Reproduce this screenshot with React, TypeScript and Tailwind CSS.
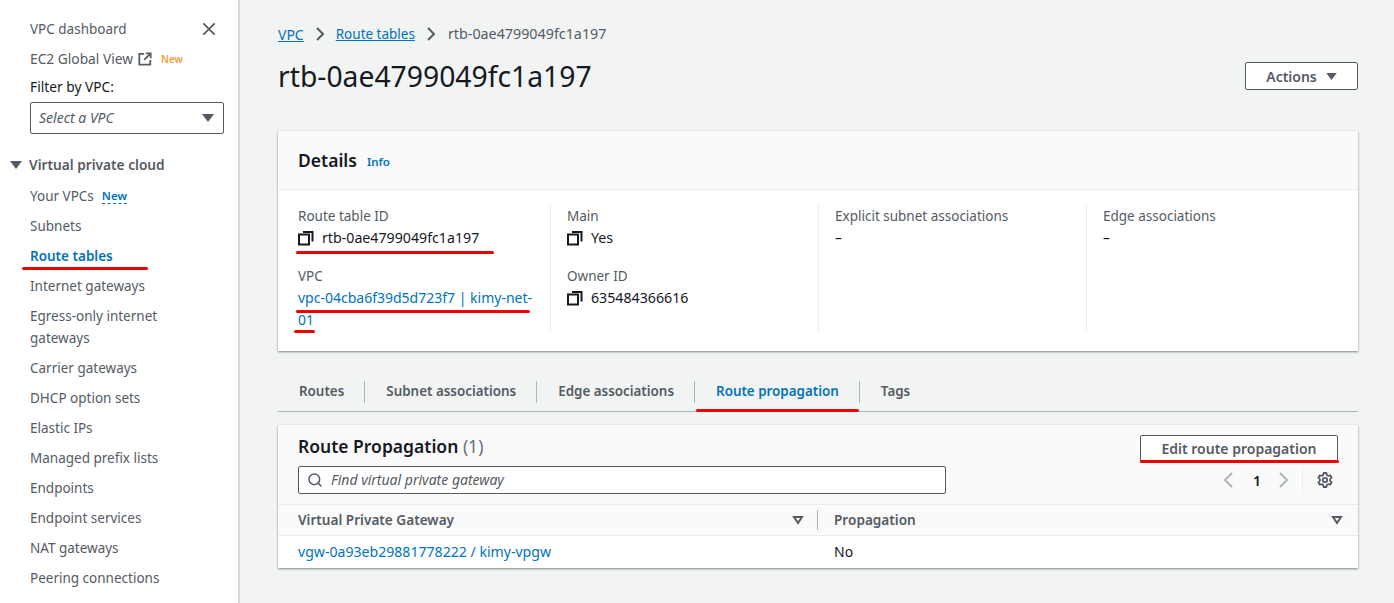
import { Search } from "lucide-react";
import type { ReactNode } from "react";

const font = { fontFamily: '"Noto Sans", sans-serif' };

const navItems = [
  "Subnets",
  "Route tables",
  "Internet gateways",
  "Egress-only internet gateways",
  "Carrier gateways",
  "DHCP option sets",
  "Elastic IPs",
  "Managed prefix lists",
  "Endpoints",
  "Endpoint services",
  "NAT gateways",
  "Peering connections",
];

// hand-drawn red marker strokes from the original screenshot
function Marker({ className }: { className: string }) {
  return <span className={`absolute h-[3px] rounded-full bg-[#f00000] ${className}`} />;
}

function Caret({ className = "" }: { className?: string }) {
  return (
    <svg viewBox="0 0 12 8" className={`h-2 w-3 ${className}`} fill="currentColor">
      <path d="M0 0h12L6 8z" />
    </svg>
  );
}

function SortCaret() {
  return (
    <svg viewBox="0 0 12 10" className="h-2.5 w-3 text-[#545b64]" fill="none" stroke="currentColor" strokeWidth="2">
      <path d="M2 2h8L6 8z" />
    </svg>
  );
}

function CopyIcon() {
  return (
    <svg viewBox="0 0 16 16" className="h-4 w-4 shrink-0 text-[#16191f]" fill="none" stroke="currentColor" strokeWidth="2">
      <rect x="1" y="4.5" width="10" height="10" />
      <path d="M5 2h9.5v9.5" />
    </svg>
  );
}

function ExternalIcon() {
  return (
    <svg viewBox="0 0 16 16" className="h-[14px] w-[14px] text-[#545b64]" fill="none" stroke="currentColor" strokeWidth="2">
      <path d="M7 2H1.5v12.5H14V9" />
      <path d="M9 1.5h5.5V7M14.5 1.5 7 9" />
    </svg>
  );
}

function GearIcon() {
  return (
    <svg viewBox="0 0 16 16" className="h-4 w-4 text-[#545b64]" fill="none" stroke="currentColor" strokeWidth="1.8" strokeLinejoin="round">
      <path d="M6.6 1h2.8l.4 2 1.5.9 2-.6 1.3 2.4-1.5 1.4v1.8l1.5 1.4-1.3 2.4-2-.6-1.5.9-.4 2H6.6l-.4-2-1.5-.9-2 .6-1.3-2.4 1.5-1.4V7.1L1.4 5.7l1.3-2.4 2 .6 1.5-.9z" />
      <circle cx="8" cy="8" r="2.2" />
    </svg>
  );
}

function Chevron({ dir }: { dir: "left" | "right" }) {
  return (
    <svg viewBox="0 0 12 16" className="h-4 w-3 text-[#aab7b8]" fill="none" stroke="currentColor" strokeWidth="2">
      <path d={dir === "left" ? "M10 1 3 8l7 7" : "M2 1l7 7-7 7"} />
    </svg>
  );
}

function Sidebar() {
  return (
    <aside className="relative h-[603px] w-[240px] shrink-0 overflow-hidden border-r-2 border-[#d5dbdb] bg-white pl-[30px] text-[13.5px] text-[#545b64]">
      <div className="mt-[14px] flex h-[30px] items-center justify-between pr-[22px]">
        <span>VPC dashboard</span>
        <svg viewBox="0 0 16 16" className="mt-[-1px] h-[14px] w-[14px] text-[#545b64]" fill="none" stroke="currentColor" strokeWidth="2">
          <path d="M1.5 1.5l13 13M14.5 1.5l-13 13" />
        </svg>
      </div>
      <div className="flex h-[30px] items-center">
        <span className="text-[13.75px]">EC2 Global View</span>
        <span className="ml-[5px]"><ExternalIcon /></span>
        <span className="ml-[9px] mt-[1px] text-[10px] font-semibold text-[#f89c3a]">New</span>
      </div>
      <div className="flex h-[27px] items-center text-[13.75px] text-[#16191f]">Filter by VPC:</div>
      <div className="mr-[14px] mt-[1px] flex h-[32px] items-center justify-between rounded-[2px] border border-[#545b64] pb-[1px] pl-2 pr-[9px] text-[14px] italic text-[#545b64]">
        <span>Select a VPC</span>
        <Caret />
      </div>
      <div className="ml-[-20px] mt-[16px] flex h-[30px] items-center gap-[7px] text-[13.7px] font-semibold">
        <Caret className="text-[#545b64]" />
        <span>Virtual private cloud</span>
      </div>
      <div className="mt-[1px] flex h-[30px] items-center">
        <span>Your VPCs</span>
        <span className="ml-2 border-b border-dashed border-[#0073bb] text-[11.5px] font-semibold leading-[14px] text-[#0073bb]">New</span>
      </div>
      {navItems.map((item) => {
        const active = item === "Route tables";
        const wraps = item.startsWith("Egress");
        return (
          <div
            key={item}
            className={`flex items-center pr-[40px] ${wraps ? "h-[52px] leading-[22px]" : "h-[30px]"} ${active ? "font-semibold text-[#0073bb]" : ""}`}
          >
            {item}
          </div>
        );
      })}
      <Marker className="left-[22px] top-[267px] w-[126px]" />
    </aside>
  );
}

function Field({ label, children, last }: { label: string; children: ReactNode; last?: boolean }) {
  return (
    <div className={last ? "" : "mb-[16px]"}>
      <div className="h-[22px] text-[13.5px] leading-[22px] text-[#545b64]">{label}</div>
      <div className="leading-[22px] text-[#16191f]">{children}</div>
    </div>
  );
}

function CopyValue({ value }: { value: string }) {
  return (
    <div className="flex h-[22px] items-center gap-[8px]">
      <CopyIcon />
      <span className="text-[14.2px]">{value}</span>
    </div>
  );
}

function DetailsCard() {
  return (
    <section className="relative mt-[35px] h-[220px] bg-white shadow-[0_1px_2px_rgba(0,28,36,0.5)]">
      <header className="flex h-[59px] items-center border-b border-[#eaeded] bg-[#fafafa] pl-5 pt-[1px]">
        <h2 className="text-[17.5px] font-semibold text-[#16191f]">Details</h2>
        <span className="ml-[10px] mt-[3px] text-[11.5px] font-semibold text-[#0073bb]">Info</span>
      </header>
      <div className="grid grid-cols-[273px_268px_268px_1fr] pt-[15px] text-[14px]">
        <div className="h-[126px] border-r border-[#eaeded] pl-5 pr-[18px]">
          <Field label="Route table ID"><CopyValue value="rtb-0ae4799049fc1a197" /></Field>
          <Field label="VPC" last>
            <a className="text-[#0073bb]">vpc-04cba6f39d5d723f7 | kimy-net-01</a>
          </Field>
        </div>
        <div className="h-[126px] border-r border-[#eaeded] pl-[16px]">
          <Field label="Main"><CopyValue value="Yes" /></Field>
          <Field label="Owner ID" last><CopyValue value="635484366616" /></Field>
        </div>
        <div className="h-[126px] border-r border-[#eaeded] pl-[16px]">
          <Field label="Explicit subnet associations" last>–</Field>
        </div>
        <div className="pl-[16px]">
          <Field label="Edge associations" last>–</Field>
        </div>
      </div>
      <Marker className="left-[18px] top-[120px] w-[198px]" />
      <Marker className="left-[18px] top-[179px] w-[234px]" />
      <Marker className="left-[16px] top-[199px] w-[21px]" />
    </section>
  );
}

const tabs = ["Routes", "Subnet associations", "Edge associations", "Route propagation", "Tags"];

function Tabs() {
  return (
    <div className="relative mt-[21px] flex h-[40px] items-center border-b border-[#aab7b8] text-[13.4px] font-semibold text-[#545b64]">
      {tabs.map((tab, i) => (
        <div key={tab} className={`flex h-[22px] items-center pl-[21px] pr-[20px] ${i < tabs.length - 1 ? "border-r border-[#aab7b8]" : ""} ${tab === "Route propagation" ? "text-[#0073bb]" : ""}`}>
          {tab}
        </div>
      ))}
      <Marker className="left-[418px] top-[37px] w-[163px]" />
    </div>
  );
}

function PropagationCard() {
  return (
    <section className="relative mt-[13px] bg-white shadow-[0_1px_2px_rgba(0,28,36,0.5)]">
      <div className="h-[80px] border-b border-[#eaeded] bg-[#fafafa] px-5">
        <div className="flex items-start justify-between pt-[10px]">
          <h2 className="mt-[-1px] text-[17.5px] font-semibold leading-[24px] text-[#16191f]">
            Route Propagation <span className="font-normal text-[#687078]">(1)</span>
          </h2>
          <button className="h-[28px] w-[198px] rounded-[2px] border border-[#545b64] bg-white pb-[2px] text-[14px] font-semibold text-[#545b64]">
            Edit route propagation
          </button>
        </div>
        <div className="mt-[3px] flex items-center justify-between">
          <div className="flex h-[28px] w-[648px] items-center gap-[8px] rounded-[2px] border border-[#545b64] bg-white pb-[1px] pl-[8px] text-[14px] italic text-[#545b64]">
            <Search size={16} strokeWidth={2.2} />
            <span>Find virtual private gateway</span>
          </div>
          <div className="flex items-center">
            <Chevron dir="left" />
            <span className="ml-[19px] mr-[17px] text-[14px] font-semibold text-[#16191f]">1</span>
            <Chevron dir="right" />
            <span className="ml-[12px] mr-[14px] h-[28px] border-l border-[#eaeded]" />
            <span className="pr-[5px]"><GearIcon /></span>
          </div>
        </div>
      </div>
      <div className="grid h-[31px] grid-cols-[540px_1fr] items-center border-b border-[#eaeded] bg-[#fafafa] text-[13.6px] font-semibold text-[#545b64]">
        <div className="flex h-[20px] items-center justify-between border-r border-[#aab7b8] pl-5 pr-[13px]">
          <span>Virtual Private Gateway</span>
          <SortCaret />
        </div>
        <div className="flex items-center justify-between pl-4 pr-[15px]">
          <span>Propagation</span>
          <SortCaret />
        </div>
      </div>
      <div className="grid h-[32px] grid-cols-[540px_1fr] items-center pb-[1px] text-[14px]">
        <a className="pl-5 text-[14.1px] text-[#0073bb]">vgw-0a93eb29881778222 / kimy-vpgw</a>
        <span className="pl-4 text-[#16191f]">No</span>
      </div>
      <Marker className="left-[862px] top-[35px] w-[199px]" />
    </section>
  );
}

function Crumb() {
  return (
    <svg viewBox="0 0 10 14" className="mx-[11px] h-[14px] w-[10px]" fill="none" stroke="currentColor" strokeWidth="2">
      <path d="M2 1l6 6-6 6" />
    </svg>
  );
}

export default function App() {
  return (
    <div className="flex h-[603px] w-[1394px] overflow-hidden bg-[#f2f3f3]" style={font}>
      <Sidebar />
      <main className="ml-[38px] w-[1080px] pt-[23px]">
        <nav className="flex h-[22px] items-center text-[13.5px] text-[#545b64]">
          <a className="text-[14px] text-[#0073bb] underline">VPC</a>
          <Crumb />
          <a className="text-[#0073bb] underline">Route tables</a>
          <Crumb />
          <span className="ml-[1px] text-[14.3px]">rtb-0ae4799049fc1a197</span>
        </nav>
        <div className="mt-[11px] flex h-[40px] items-center justify-between">
          <h1 className="text-[28.3px] text-[#16191f]">rtb-0ae4799049fc1a197</h1>
          <button className="flex h-[28px] w-[113px] items-center justify-center gap-[9px] rounded-[2px] border border-[#545b64] bg-white text-[14px] font-semibold text-[#545b64]">
            Actions <Caret className="h-[7px] w-[11px]" />
          </button>
        </div>
        <DetailsCard />
        <Tabs />
        <PropagationCard />
      </main>
    </div>
  );
}
